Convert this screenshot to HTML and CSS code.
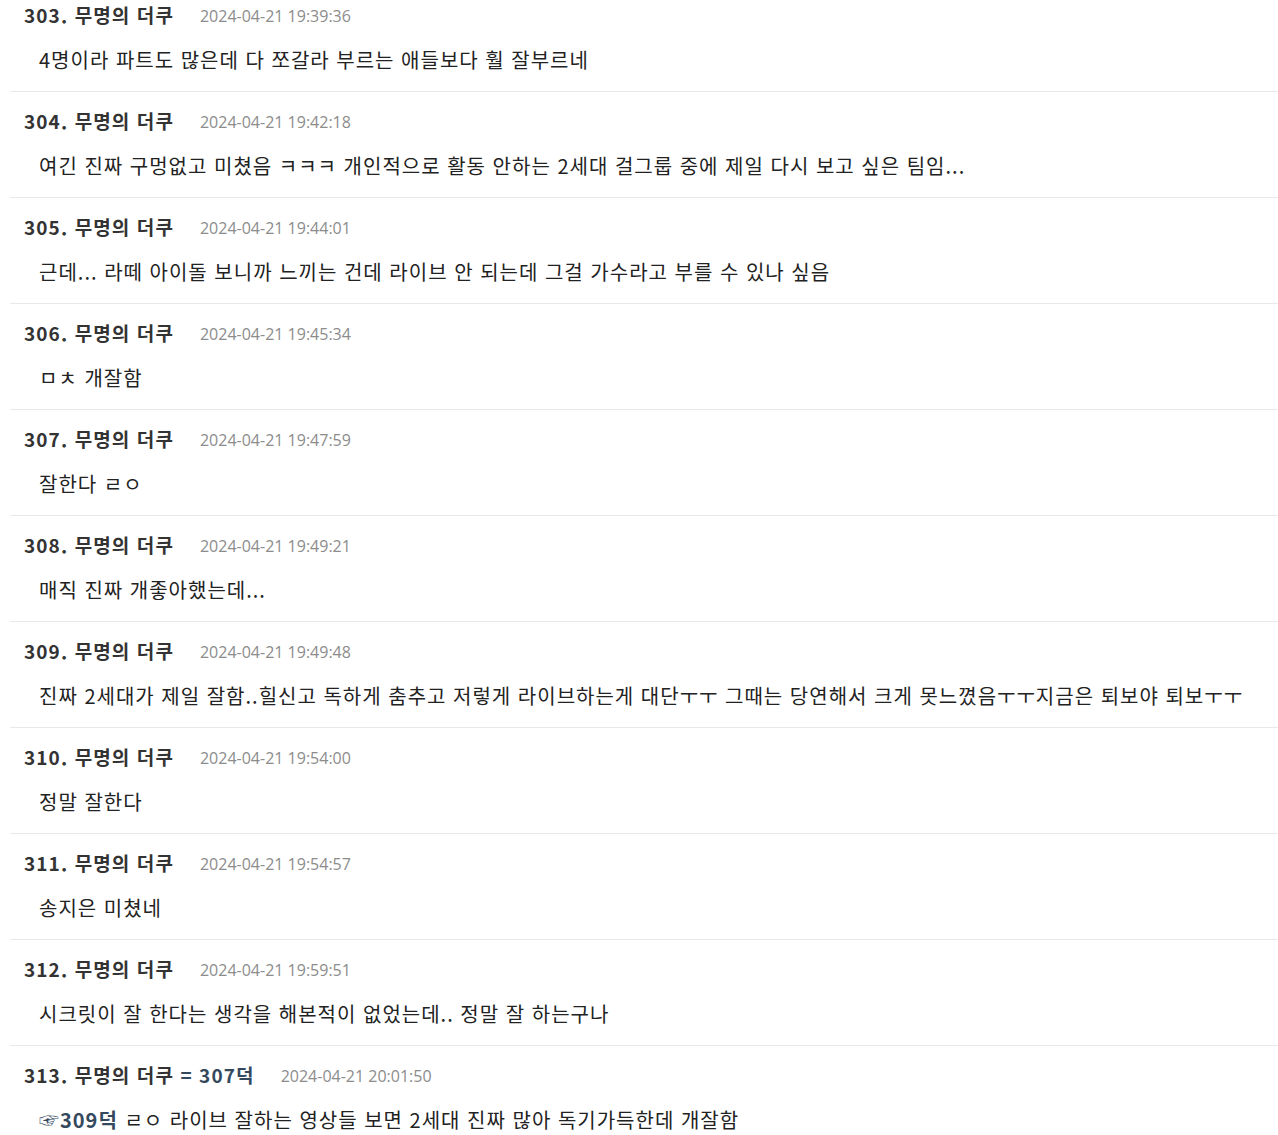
FILE: index.html
```html
<!DOCTYPE html>
<html lang="ko">
<head>
<meta charset="utf-8">
<link rel="stylesheet" href="styles.css">
</head>
<body>
<ul class="comments">
  <li class="comment">
    <div class="head"><span class="name">303. 무명의 더쿠</span><span class="date">2024-04-21 19:39:36</span></div>
    <div class="text">4명이라 파트도 많은데 다 쪼갈라 부르는 애들보다 훨 잘부르네</div>
  </li>
  <li class="comment">
    <div class="head"><span class="name">304. 무명의 더쿠</span><span class="date">2024-04-21 19:42:18</span></div>
    <div class="text">여긴 진짜 구멍없고 미쳤음 ㅋㅋㅋ 개인적으로 활동 안하는 2세대 걸그룹 중에 제일 다시 보고 싶은 팀임...</div>
  </li>
  <li class="comment">
    <div class="head"><span class="name">305. 무명의 더쿠</span><span class="date">2024-04-21 19:44:01</span></div>
    <div class="text">근데... 라떼 아이돌 보니까 느끼는 건데 라이브 안 되는데 그걸 가수라고 부를 수 있나 싶음</div>
  </li>
  <li class="comment">
    <div class="head"><span class="name">306. 무명의 더쿠</span><span class="date">2024-04-21 19:45:34</span></div>
    <div class="text">ㅁㅊ 개잘함</div>
  </li>
  <li class="comment">
    <div class="head"><span class="name">307. 무명의 더쿠</span><span class="date">2024-04-21 19:47:59</span></div>
    <div class="text">잘한다 ㄹㅇ</div>
  </li>
  <li class="comment">
    <div class="head"><span class="name">308. 무명의 더쿠</span><span class="date">2024-04-21 19:49:21</span></div>
    <div class="text">매직 진짜 개좋아했는데...</div>
  </li>
  <li class="comment">
    <div class="head"><span class="name">309. 무명의 더쿠</span><span class="date">2024-04-21 19:49:48</span></div>
    <div class="text">진짜 2세대가 제일 잘함..힐신고 독하게 춤추고 저렇게 라이브하는게 대단ㅜㅜ 그때는 당연해서 크게 못느꼈음ㅜㅜ지금은 퇴보야 퇴보ㅜㅜ</div>
  </li>
  <li class="comment">
    <div class="head"><span class="name">310. 무명의 더쿠</span><span class="date">2024-04-21 19:54:00</span></div>
    <div class="text">정말 잘한다</div>
  </li>
  <li class="comment">
    <div class="head"><span class="name">311. 무명의 더쿠</span><span class="date">2024-04-21 19:54:57</span></div>
    <div class="text">송지은 미쳤네</div>
  </li>
  <li class="comment">
    <div class="head"><span class="name">312. 무명의 더쿠</span><span class="date">2024-04-21 19:59:51</span></div>
    <div class="text">시크릿이 잘 한다는 생각을 해본적이 없었는데.. 정말 잘 하는구나</div>
  </li>
  <li class="comment">
    <div class="head"><span class="name">313. 무명의 더쿠 <span class="ref">= 307덕</span></span><span class="date">2024-04-21 20:01:50</span></div>
    <div class="text"><span class="ref">☞309덕</span> ㄹㅇ 라이브 잘하는 영상들 보면 2세대 진짜 많아 독기가득한데 개잘함</div>
  </li>
</ul>
</body>
</html>
```

FILE: styles.css
```css
html, body {
  margin: 0;
  padding: 0;
  background: #fff;
}
body {
  font-family: "Noto Sans CJK KR", "Noto Sans", sans-serif;
  color: #222;
  overflow: hidden;
}
.comments {
  list-style: none;
  margin: -14px 0 0 10px;
  padding: 0;
}
.comment {
  padding: 13px 0 16px 14px;
  border-bottom: 1px solid #e8e8e8;
}
.head {
  display: flex;
  align-items: center;
  gap: 26px;
  height: 30px;
}
.name {
  font-size: 19px;
  font-weight: 700;
  color: #333;
  letter-spacing: 1.1px;
}
.date {
  font-size: 16px;
  color: #8c8c8c;
  padding-top: 4px;
  font-family: "Open Sans", "Noto Sans CJK KR", sans-serif;
}
.text {
  margin-top: 16px;
  height: 30px;
  line-height: 30px;
  padding-left: 15px;
  font-size: 20px;
  letter-spacing: 1px;
  color: #222;
  white-space: nowrap;
}
.ref {
  color: #34495e;
  font-weight: 700;
}
```
